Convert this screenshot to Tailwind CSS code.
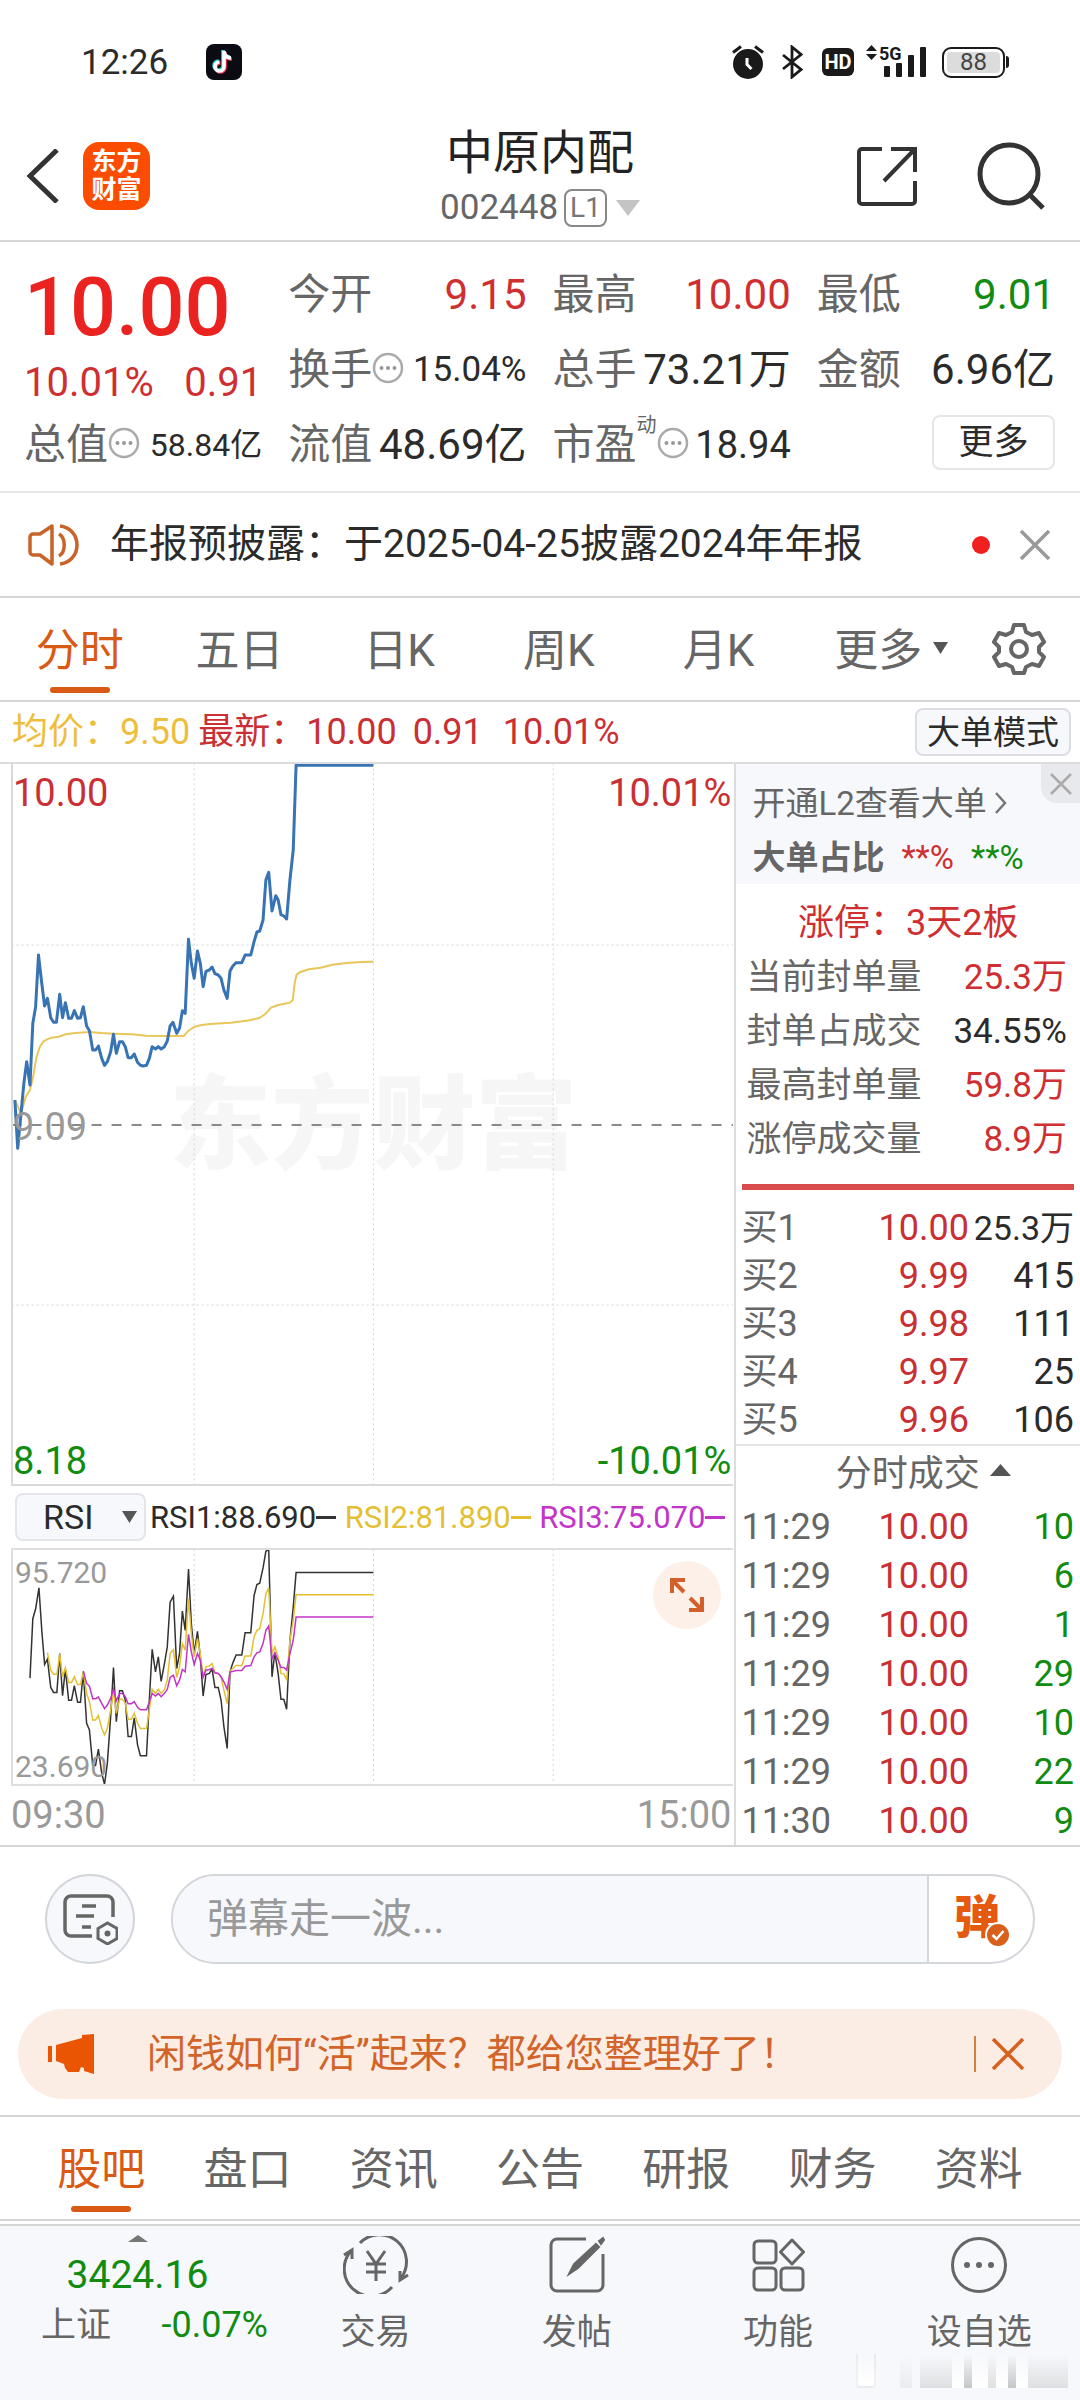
<!DOCTYPE html>
<html lang="zh-CN">
<head>
    <meta charset="UTF-8">
    <meta name="viewport" content="width=device-width, initial-scale=1.0">
    <title>中原内配 002448</title>
    <script src="https://cdn.jsdelivr.net/npm/@tailwindcss/browser@4"></script>
</head>
<body class="bg-white text-[#2b2b2b] font-['Roboto','Noto_Sans_CJK_SC',sans-serif] leading-none min-h-screen flex flex-col">

    <!-- Status bar -->
    <div class="flex items-center justify-between h-[124px] pl-[81px] pr-[71px]">
        <div class="flex items-center gap-[38px]">
            <span class="text-[35px]">12:26</span>
            <svg class="w-9 h-9" viewBox="0 0 36 36">
                <rect width="36" height="36" rx="8" fill="#0b0b14"/>
                <g fill="none" stroke-width="3.6">
                    <path d="M18 7v15.500a4.500 4.500 0 1 1-4.500-4.500M18 8c1 4 4 6 7 6" stroke="#25d6e0" transform="translate(-1 -1)"/>
                    <path d="M18 7v15.500a4.500 4.500 0 1 1-4.500-4.500M18 8c1 4 4 6 7 6" stroke="#f0355a" transform="translate(1 1)"/>
                    <path d="M18 7v15.500a4.500 4.500 0 1 1-4.500-4.500M18 8c1 4 4 6 7 6" stroke="#fff"/>
                </g>
            </svg>
        </div>
        <div class="flex items-center text-[#1a1a1a]">
            <svg class="w-[32px] h-[34px]" viewBox="0 0 32 34" fill="none" stroke="currentColor">
                <circle cx="16" cy="19" r="15" fill="currentColor" stroke="none"/>
                <path d="M1 7.500 9 1.500M31 7.500 23 1.500" stroke-width="3"/>
                <path d="M15 13v6.500l4.500 4.500" stroke="#fff" stroke-width="3"/>
            </svg>
            <svg class="w-[21px] h-[34px] ml-[18px]" viewBox="0 0 21 34" fill="none" stroke="currentColor" stroke-width="2.800">
                <path d="M1 10 19 24.500 10 32V2l9 7.500L1 24"/>
            </svg>
            <span class="ml-[19px] w-8 h-7 rounded-md bg-[#1a1a1a] text-white text-[20px] font-bold flex items-center justify-center">HD</span>
            <div class="relative ml-[12px] w-[60px] h-[34px]">
                <svg class="w-full h-full" viewBox="0 0 60 34" fill="currentColor">
                    <path d="M0 6 5.500 0 11 6zM0 9h11L5.500 15z"/>
                    <rect x="18" y="21" width="6" height="11" rx="1"/>
                    <rect x="30" y="18" width="6" height="14" rx="1"/>
                    <rect x="42" y="10" width="6" height="22" rx="1"/>
                    <rect x="54" y="2" width="6" height="30" rx="1"/>
                </svg>
                <span class="absolute left-[13px] top-0 text-[18px] font-bold">5G</span>
            </div>
            <div class="ml-4 w-[63px] h-[31px] rounded-[9px] border-2 border-[#1a1a1a] p-[3px]">
                <div class="h-full bg-[#dcdcdc] rounded-[4px] text-[#444] text-[24px] flex items-center justify-center">88</div>
            </div>
            <span class="ml-px w-[3px] h-3 bg-[#1a1a1a] rounded-r"></span>
        </div>
    </div>

    <!-- Header -->
    <header class="grid grid-cols-[1fr_auto_1fr] items-center h-[118px] pb-3 px-[27px] border-b-2 border-[#d5d5d5]">
        <div class="flex items-center gap-[24px]">
            <button aria-label="返回">
                <svg class="w-8 h-[54px]" viewBox="0 0 32 54" fill="none" stroke="#333" stroke-width="5"><path d="M30 1 3 27l27 26"/></svg>
            </button>
            <div class="w-[67px] h-[68px] rounded-2xl bg-[#fc4c02] text-white text-[25px] leading-[28px] font-bold text-center flex flex-col justify-center">
                <span>东方</span><span>财富</span>
            </div>
        </div>
        <div class="text-center">
            <h1 class="text-[47px] leading-[56px] text-[#222]">中原内配</h1>
            <button class="mt-2 flex items-center text-[35px] text-[#666] leading-[38px]">
                002448<span class="ml-[6px] h-[38px] px-[4px] border-2 border-[#888] rounded-lg text-[28px] leading-[34px] text-[#777]">L1</span>
                <svg class="ml-[9px] w-6 h-4" viewBox="0 0 24 16"><path d="M0 0h24L12 16z" fill="#c4c4c4"/></svg>
            </button>
        </div>
        <div class="flex items-center justify-end gap-[60px] pr-[8px]">
            <button aria-label="分享">
                <svg class="w-[60px] h-[60px]" viewBox="0 0 60 60" fill="none" stroke="#333" stroke-width="4">
                    <path d="M25 3H5a3 3 0 0 0-3 3v49a3 3 0 0 0 3 3h50a3 3 0 0 0 3-3V35"/>
                    <path d="M34 3h24v23M57 4 27 35"/>
                </svg>
            </button>
            <button aria-label="搜索">
                <svg class="w-[68px] h-[68px]" viewBox="0 0 68 68" fill="none" stroke="#333" stroke-width="5">
                    <circle cx="32" cy="32" r="29"/><path d="M53 53l13 13"/>
                </svg>
            </button>
        </div>
    </header>

    <!-- Quote summary -->
    <section class="grid grid-cols-4 auto-rows-[75px] gap-x-[26px] pl-[24px] pr-[25px] pt-[15px] pb-[9px] border-b-2 border-[#e6e6e6] text-[42px]">
        <div class="row-span-2 whitespace-nowrap">
            <p class="h-[100px] flex items-center text-[81px] font-medium text-[#ea2320]">10.00</p>
            <p class="h-[52px] flex items-center justify-between text-[40px] text-[#cf2f31]"><span>10.01%</span><span>0.91</span></p>
        </div>
        <div class="flex items-center justify-between"><span class="text-[#666]">今开</span><span class="text-[#cf2f31]">9.15</span></div>
        <div class="flex items-center justify-between"><span class="text-[#666]">最高</span><span class="text-[#cf2f31]">10.00</span></div>
        <div class="flex items-center justify-between"><span class="text-[#666]">最低</span><span class="text-[#118c11]">9.01</span></div>
        <div class="flex items-center justify-between">
            <span class="text-[#666] flex items-center">换手
                <svg class="w-[32px] h-[32px] mb-1" viewBox="0 0 32 32"><circle cx="16" cy="16" r="14" fill="none" stroke="#aaa" stroke-width="2.500"/><g fill="#999"><circle cx="9.500" cy="16" r="2"/><circle cx="16" cy="16" r="2"/><circle cx="22.500" cy="16" r="2"/></g></svg>
            </span>
            <span class="text-[35px]">15.04%</span>
        </div>
        <div class="flex items-center justify-between whitespace-nowrap"><span class="text-[#666]">总手</span><span class="text-[42px]">73.21万</span></div>
        <div class="flex items-center justify-between whitespace-nowrap"><span class="text-[#666]">金额</span><span class="text-[42px]">6.96亿</span></div>
        <div class="flex items-center justify-between whitespace-nowrap">
            <span class="text-[#666] flex items-center">总值
                <svg class="w-[32px] h-[32px] mb-1" viewBox="0 0 32 32"><circle cx="16" cy="16" r="14" fill="none" stroke="#aaa" stroke-width="2.500"/><g fill="#999"><circle cx="9.500" cy="16" r="2"/><circle cx="16" cy="16" r="2"/><circle cx="22.500" cy="16" r="2"/></g></svg>
            </span>
            <span class="text-[32px]">58.84亿</span>
        </div>
        <div class="flex items-center justify-between whitespace-nowrap"><span class="text-[#666]">流值</span><span class="text-[42px]">48.69亿</span></div>
        <div class="flex items-center justify-between whitespace-nowrap">
            <span class="text-[#666] flex items-center">市盈<sup class="text-[20px] mb-5">动</sup>
                <svg class="w-[32px] h-[32px] mb-1" viewBox="0 0 32 32"><circle cx="16" cy="16" r="14" fill="none" stroke="#aaa" stroke-width="2.500"/><g fill="#999"><circle cx="9.500" cy="16" r="2"/><circle cx="16" cy="16" r="2"/><circle cx="22.500" cy="16" r="2"/></g></svg>
            </span>
            <span class="text-[38px]">18.94</span>
        </div>
        <div class="flex items-center justify-end"><button class="w-[123px] h-[55px] mb-1 border-2 border-[#e6e6e6] rounded-lg text-[35px] leading-none">更多</button></div>
    </section>

    <!-- Announcement -->
    <section class="flex items-center h-[105px] pl-[28px] pr-[30px] border-b-2 border-[#d5d5d5]">
        <svg class="w-[52px] h-[44px]" viewBox="0 0 52 44" fill="none" stroke="#c8642a" stroke-width="3.500">
            <path d="M24 3v38L12 32H5a3 3 0 0 1-3-3V14a3 3 0 0 1 3-3h7z" stroke-linejoin="round"/>
            <path d="M31 11c7 4 7 18 0 22M32 3c9 1 17 8 17 19s-8 18-17 19"/>
        </svg>
        <a href="#" class="ml-[30px] text-[39px] whitespace-nowrap">年报预披露：于2025-04-25披露2024年年报</a>
        <span class="ml-auto w-[18px] h-[18px] rounded-full bg-[#f0201e]"></span>
        <button class="ml-[30px]" aria-label="关闭公告">
            <svg class="w-[30px] h-[30px]" viewBox="0 0 30 30" stroke="#999" stroke-width="3.500"><path d="M1 1l28 28M29 1 1 29"/></svg>
        </button>
    </section>

    <!-- Period tabs -->
    <nav class="flex h-[104px] border-b-2 border-[#d5d5d5] text-[44px] text-[#666]">
        <button class="relative flex-1 pt-1 text-[#d95a14]">分时<span class="absolute left-1/2 -translate-x-1/2 bottom-[7px] w-[60px] h-[6px] rounded-full bg-[#d95a14]"></span></button>
        <button class="flex-1 pt-1">五日</button>
        <button class="flex-1 pt-1">日K</button>
        <button class="flex-1 pt-1">周K</button>
        <button class="flex-1 pt-1">月K</button>
        <button class="relative flex-1 pt-1">更多<svg class="absolute right-[10px] top-[44px] w-[15px] h-3" viewBox="0 0 15 12"><path d="M0 0h15L7.500 12z" fill="#555"/></svg></button>
        <button class="w-[122px] flex items-center justify-center" aria-label="设置">
            <svg class="w-[54px] h-[54px]" viewBox="0 0 54 54" fill="none" stroke="#666" stroke-width="4" stroke-linejoin="round">
                <path d="M22 3h10l2 7 6 3 7-2 5 9-5 5v5l5 5-5 9-7-2-6 3-2 6H22l-2-6-6-3-7 2-5-9 5-5v-5l-5-5 5-9 7 2 6-3z"/>
                <circle cx="27" cy="27" r="8"/>
            </svg>
        </button>
    </nav>

    <div class="flex items-center h-[62px] pl-[12px] pr-[9px] border-b-2 border-[#dcdcdc] text-[36px] whitespace-nowrap">
        <span class="text-[#edbe3e]">均价：9.50</span>
        <span class="ml-2 text-[#c92f33]">最新：10.00</span>
        <span class="ml-4 text-[#c92f33]">0.91</span>
        <span class="ml-5 text-[#c92f33]">10.01%</span>
        <button class="ml-auto h-12 px-[10px] border-2 border-[#dcdee3] rounded-lg bg-[#f7f8fb] text-[33px] leading-none">大单模式</button>
    </div>

    <main class="flex border-b-2 border-[#d5d5d5]">
        <!-- Charts -->
        <div class="flex-1 min-w-0 pl-[11px] pr-px">
            <div class="relative border-l-2 border-b-2 border-[#d9d9d9] text-[38px]">
                <p class="absolute inset-x-0 top-[311px] text-center text-[102px] font-black text-[#f6f6f6] whitespace-nowrap">东方财富</p>
                <svg class="relative block w-full h-[720px]" viewBox="28 42 1527 2160" preserveAspectRatio="none" fill="none">
                    <g stroke="#d4d4d4" stroke-dasharray="2 3">
                        <path vector-effect="non-scaling-stroke" d="M412 40V2205M792 40V2205M1173 40V2205M25 585H1555M25 1665H1555"/>
                    </g>
                    <path vector-effect="non-scaling-stroke" d="M25 1125H1555" stroke="#8a8a8a" stroke-width="2" stroke-dasharray="10 10"/>
                    <path vector-effect="non-scaling-stroke" stroke="#e9c65a" stroke-width="2" d="M32 1050 45 1090 55 1040 64 1020 70 985 78 920 85 890 92 875 100 868 110 863 125 860 140 853 160 849 190 846 215 849 240 851 280 853 310 857 345 858 390 858 400 842 412 831 425 826 445 822 490 818 530 811 550 804 562 793 575 773 590 765 615 758 621 750 625 700 629 674 637 666 655 658 680 653 705 644 735 639 765 636 792 635"/>
                    <path vector-effect="non-scaling-stroke" stroke="#3873b3" stroke-width="3" stroke-linejoin="round" d="M32 1050 38 1195 45 1090 51 1000 57 935 64 1005 70 820 76 770 82 615 89 700 95 768 101 745 108 803 114 817 120 817 127 733 133 803 139 758 146 805 152 805 158 782 165 805 171 803 177 770 184 828 190 842 197 900 203 900 209 888 216 925 222 946 228 935 235 905 241 853 247 910 254 875 260 875 266 890 272 923 279 923 285 912 292 937 298 946 304 948 311 946 317 925 323 890 330 897 336 890 342 897 349 890 355 873 361 828 367 817 375 850 381 835 387 782 393 790 400 568 406 640 412 685 419 603 425 640 431 710 437 664 444 660 450 651 456 671 463 675 469 685 475 720 482 745 488 663 494 648 501 638 513 638 520 615 532 615 539 575 545 546 551 543 558 510 564 390 570 367 577 483 585 437 590 450 596 494 602 498 608 507 615 390 622 300 628 46H792"/>
                </svg>
                <span class="absolute left-0 top-[10px] text-[#c92f33]">10.00</span>
                <span class="absolute right-[2px] top-[10px] text-[#c92f33]">10.01%</span>
                <span class="absolute left-0 top-[344px] text-[#999]">9.09</span>
                <span class="absolute left-0 bottom-1 text-[#118c11]">8.18</span>
                <span class="absolute right-[2px] bottom-1 text-[#118c11]">-10.01%</span>
            </div>

            <div class="flex items-center h-[62px] pl-[4px] pr-2 text-[31px] whitespace-nowrap">
                <div class="relative w-[131px]">
                    <select class="appearance-none w-full h-[48px] pl-[26px] border-2 border-[#e3e5ea] rounded-lg bg-[#f7f8fb] text-[34px] leading-none" aria-label="指标">
                        <option>RSI</option>
                    </select>
                    <svg class="absolute right-[9px] top-[18px] w-[15px] h-3 pointer-events-none" viewBox="0 0 15 12"><path d="M0 0h15L7.500 12z" fill="#555"/></svg>
                </div>
                <div class="flex flex-1 justify-between pl-1">
                    <span class="flex items-center">RSI1:88.690<i class="w-5 h-[3px] bg-[#333]"></i></span>
                    <span class="flex items-center text-[#e3c033]">RSI2:81.890<i class="w-5 h-[3px] bg-[#e3c033]"></i></span>
                    <span class="flex items-center text-[#c235c8]">RSI3:75.070<i class="w-5 h-[3px] bg-[#c235c8]"></i></span>
                </div>
            </div>

            <div class="relative border-l-2 border-t-2 border-b-2 border-[#dedede] text-[30px] text-[#999]">
                <svg class="block w-full h-[234px]" viewBox="28 208 1527 705" preserveAspectRatio="none" fill="none">
                    <path vector-effect="non-scaling-stroke" stroke="#d4d4d4" stroke-dasharray="2 3" d="M412 205V914M792 205V914M1173 205V914"/>
                    <path vector-effect="non-scaling-stroke" stroke="#333" stroke-width="1.500" d="M64 594 70 415 76 385 83 322 89 450 95 553 101 537 108 622 114 637 121 637 127 520 133 647 139 567 146 661 152 661 158 617 165 667 171 667 177 575 184 730 190 750 197 857 203 857 209 808 216 880 222 914 228 850 235 710 241 562 247 725 254 632 260 632 266 660 272 770 279 770 285 714 292 795 298 828 311 828 317 660 323 507 330 575 336 530 342 604 349 550 355 500 361 365 368 347 375 565 381 520 387 392 393 450 400 265 406 430 412 520 419 453 425 530 431 648 437 583 444 580 450 567 456 622 463 622 469 660 475 740 482 806 488 575 494 548 501 524 513 524 520 457 532 457 539 345 545 312 551 308 558 262 564 212 570 207 577 590 583 517 590 580 596 658 602 658 608 688 615 480 622 380 628 276H792"/>
                    <path vector-effect="non-scaling-stroke" stroke="#e3c033" stroke-width="1.500" d="M101 517 108 570 114 582 121 582 127 522 133 590 139 563 146 607 152 607 158 590 165 613 171 613 177 575 184 640 190 665 197 720 203 720 209 707 216 745 222 765 228 745 235 690 241 632 247 700 254 658 260 658 266 670 272 718 279 718 285 700 292 730 298 746 311 746 317 690 323 628 330 640 336 628 342 640 349 628 355 600 361 520 368 508 375 592 381 560 387 490 393 510 400 355 406 460 412 530 419 475 425 520 431 590 437 560 444 558 450 550 456 578 463 580 469 590 475 630 482 671 488 572 494 565 501 556 513 556 520 527 532 527 539 470 545 450 551 445 558 400 564 340 570 322 577 520 583 500 590 530 596 580 602 582 608 598 615 480 622 420 628 343H792"/>
                    <path vector-effect="non-scaling-stroke" stroke="#c235c8" stroke-width="1.500" d="M177 572 184 610 190 618 197 656 203 656 209 651 216 670 222 686 228 675 235 655 241 627 247 662 254 640 260 640 266 650 272 671 279 671 285 665 292 682 298 689 311 689 317 665 323 640 330 648 336 640 342 650 349 640 355 628 361 592 368 585 375 617 381 600 387 568 393 575 400 462 406 515 412 553 419 520 425 540 431 592 437 570 444 568 450 565 456 578 463 580 469 590 475 605 482 628 488 576 501 571 513 571 520 558 532 556 539 530 545 518 551 515 558 490 564 450 570 437 577 537 583 517 590 540 596 562 602 562 608 570 615 520 622 480 628 410H792"/>
                </svg>
                <span class="absolute left-[2px] top-2">95.720</span>
                <span class="absolute left-[2px] bottom-[2px]">23.690</span>
                <button class="absolute right-3 top-[11px] w-[68px] h-[68px] rounded-full bg-[#fdf0e8] flex items-center justify-center" aria-label="全屏">
                    <svg class="w-[34px] h-[34px]" viewBox="0 0 34 34" fill="none" stroke="#d2602a" stroke-width="4"><path d="M2 15V2h13M2 2l12 12M32 19v13H19M32 32 20 20"/></svg>
                </button>
            </div>
            <div class="flex justify-between items-center h-[58px] pr-[2px] text-[38px] text-[#999]"><span>09:30</span><span>15:00</span></div>
        </div>

        <!-- Order book -->
        <aside class="w-[32%] border-l-2 border-[#dcdcdc] whitespace-nowrap">
            <div class="relative bg-[#f7f8fb] pl-[16px] pt-[12px] h-[120px] text-[33px] text-[#666]">
                <a href="#" class="flex items-center h-[54px]">开通L2查看大单<svg class="ml-[8px] w-[12px] h-[22px]" viewBox="0 0 12 22" fill="none" stroke="#777" stroke-width="2.500"><path d="M1 1l9 10L1 21"/></svg></a>
                <p class="flex items-center h-[54px]"><b>大单占比</b><span class="ml-[17px] text-[#cf2f31]">**%</span><span class="ml-[17px] text-[#118c11]">**%</span></p>
                <button class="absolute right-0 top-0 w-[39px] h-[39px] rounded-bl-2xl bg-[#e8e9ec] flex items-center justify-center" aria-label="关闭">
                    <svg class="w-[22px] h-[22px]" viewBox="0 0 22 22" stroke="#aaa" stroke-width="2.500"><path d="M1 1l20 20M21 1 1 21"/></svg>
                </button>
            </div>
            <p class="flex items-center justify-center h-[66px] pt-[12px] text-[36px] text-[#cf2f31]">涨停：3天2板</p>
            <dl class="pl-[10px] pr-[13px] text-[35px] text-[#666]">
                <div class="flex items-center justify-between h-[54px]"><dt>当前封单量</dt><dd class="text-[#cf2f31]">25.3万</dd></div>
                <div class="flex items-center justify-between h-[54px]"><dt>封单占成交</dt><dd class="text-[#2b2b2b]">34.55%</dd></div>
                <div class="flex items-center justify-between h-[54px]"><dt>最高封单量</dt><dd class="text-[#cf2f31]">59.8万</dd></div>
                <div class="flex items-center justify-between h-[54px]"><dt>涨停成交量</dt><dd class="text-[#cf2f31]">8.9万</dd></div>
            </dl>
            <div class="mx-[6px] mt-[18px] h-[6px] bg-[#d94b4b]"></div>
            <div class="pt-[14px] border-b-2 border-[#e4e4e4]">
                <table class="w-full table-fixed text-[36px] text-right">
                    <tr class="h-12"><th class="pl-[5px] font-normal text-left text-[#666]">买1</th><td class="text-[#c92f33]">10.00</td><td class="w-[111px] pr-[6px] text-[34px]">25.3万</td></tr>
                    <tr class="h-12"><th class="pl-[5px] font-normal text-left text-[#666]">买2</th><td class="text-[#c92f33]">9.99</td><td class="pr-[6px]">415</td></tr>
                    <tr class="h-12"><th class="pl-[5px] font-normal text-left text-[#666]">买3</th><td class="text-[#c92f33]">9.98</td><td class="pr-[6px]">111</td></tr>
                    <tr class="h-12"><th class="pl-[5px] font-normal text-left text-[#666]">买4</th><td class="text-[#c92f33]">9.97</td><td class="pr-[6px]">25</td></tr>
                    <tr class="h-12"><th class="pl-[5px] font-normal text-left text-[#666]">买5</th><td class="text-[#c92f33]">9.96</td><td class="pr-[6px]">106</td></tr>
                </table>
            </div>
            <button class="flex items-center justify-center gap-[10px] w-full h-[56px] pl-[30px] text-[36px] text-[#666]">分时成交<svg class="w-[21px] h-3 mb-2" viewBox="0 0 21 12"><path d="M0 12 10.500 0 21 12z" fill="#555"/></svg></button>
            <table class="w-full table-fixed text-[36px] text-right">
                <tr class="h-[49px]"><td class="pl-[5px] text-left text-[#666]">11:29</td><td class="text-[#c92f33]">10.00</td><td class="w-[111px] pr-[6px] text-[#118c11]">10</td></tr>
                <tr class="h-[49px]"><td class="pl-[5px] text-left text-[#666]">11:29</td><td class="text-[#c92f33]">10.00</td><td class="pr-[6px] text-[#118c11]">6</td></tr>
                <tr class="h-[49px]"><td class="pl-[5px] text-left text-[#666]">11:29</td><td class="text-[#c92f33]">10.00</td><td class="pr-[6px] text-[#118c11]">1</td></tr>
                <tr class="h-[49px]"><td class="pl-[5px] text-left text-[#666]">11:29</td><td class="text-[#c92f33]">10.00</td><td class="pr-[6px] text-[#118c11]">29</td></tr>
                <tr class="h-[49px]"><td class="pl-[5px] text-left text-[#666]">11:29</td><td class="text-[#c92f33]">10.00</td><td class="pr-[6px] text-[#118c11]">10</td></tr>
                <tr class="h-[49px]"><td class="pl-[5px] text-left text-[#666]">11:29</td><td class="text-[#c92f33]">10.00</td><td class="pr-[6px] text-[#118c11]">22</td></tr>
                <tr class="h-[49px]"><td class="pl-[5px] text-left text-[#666]">11:30</td><td class="text-[#c92f33]">10.00</td><td class="pr-[6px] text-[#118c11]">9</td></tr>
            </table>
        </aside>
    </main>

    <!-- Live comment box -->
    <div class="flex items-center gap-[36px] pt-[27px] pl-[45px] pr-[45px]">
        <button class="w-[90px] h-[90px] shrink-0 rounded-full border-2 border-[#d3d6da] bg-[#f7f8fb] flex items-center justify-center" aria-label="弹幕设置">
            <svg class="w-[56px] h-[52px]" viewBox="0 0 56 52" fill="none" stroke="#666" stroke-width="3.500">
                <path d="M30 43H9a6 6 0 0 1-6-6V9a6 6 0 0 1 6-6h36a6 6 0 0 1 6 6v15"/>
                <path d="M20 13h14M14 23h18M20 34h9"/>
                <path d="M45.500 30 55 35.500v10L45.500 51 36 45.500v-10z" stroke-width="3"/><circle cx="45.500" cy="40.500" r="3" fill="#666" stroke="none"/>
            </svg>
        </button>
        <div class="flex flex-1 h-[90px] rounded-full border-2 border-[#d3d6da] overflow-hidden">
            <input type="text" aria-label="弹幕" placeholder="弹幕走一波..." class="flex-1 min-w-0 pl-[34px] bg-[#f7f8fb] text-[41px] leading-none placeholder:text-[#999] outline-none">
            <button class="relative w-[106px] border-l-2 border-[#d3d6da] pr-[8px] pb-1 text-[46px] leading-none font-black text-[#e35a10]" aria-label="弹幕开关">弹
                <svg class="absolute right-[22px] bottom-[14px] w-[26px] h-[26px]" viewBox="0 0 26 26"><circle cx="13" cy="13" r="12" fill="#d8601c" stroke="#fff" stroke-width="2"/><path d="M7.500 13l4 4 7-8" fill="none" stroke="#fff" stroke-width="2.500"/></svg>
            </button>
        </div>
    </div>

    <!-- Promo banner -->
    <div class="flex items-center h-[90px] mt-[45px] mx-[18px] pl-[30px] pr-[38px] rounded-full bg-[#fcede4] text-[#d2642a]">
        <svg class="w-[46px] h-[40px]" viewBox="0 0 46 40" fill="#ea5504"><path d="M0 12h4v16H0zM8 11 34 4V1L46 0v40l-10-3v-3l-3-1-2 5H20l-3-4-1-4-8-3z"/></svg>
        <a href="#" class="ml-[53px] text-[39px] whitespace-nowrap">闲钱如何“活”起来？都给您整理好了！</a>
        <span class="ml-auto w-[2px] h-9 bg-[#d2803f]"></span>
        <button class="ml-[16px]" aria-label="关闭广告">
            <svg class="w-[32px] h-[32px]" viewBox="0 0 32 32" stroke="#d8601c" stroke-width="3.500"><path d="M1 1l30 30M31 1 1 31"/></svg>
        </button>
    </div>

    <!-- Content tabs -->
    <nav class="mt-[16px] flex h-[106px] px-[28px] border-y-2 border-[#d5d5d5] text-[44px] text-[#666]">
        <button class="relative flex-1 pt-1 text-[#d95a14]">股吧<span class="absolute left-1/2 -translate-x-1/2 bottom-[7px] w-[60px] h-[6px] rounded-full bg-[#d95a14]"></span></button>
        <button class="flex-1 pt-1">盘口</button>
        <button class="flex-1 pt-1">资讯</button>
        <button class="flex-1 pt-1">公告</button>
        <button class="flex-1 pt-1">研报</button>
        <button class="flex-1 pt-1">财务</button>
        <button class="flex-1 pt-1">资料</button>
    </nav>

    <!-- Bottom bar -->
    <footer class="relative flex flex-1 mt-[3px] border-t-2 border-[#d5d5d5] bg-[#f7f8fb] text-[35px] text-[#666]">
        <button class="w-[275px] flex flex-col items-center pt-[9px]">
            <svg class="w-5 h-[7px]" viewBox="0 0 20 7"><path d="M0 7 10 0l10 7z" fill="#777"/></svg>
            <span class="mt-[14px] text-[39px] text-[#118c11]">3424.16</span>
            <span class="mt-[12px] w-full flex items-center justify-between pl-[41px] pr-[7px]">上证<span class="text-[36px] text-[#118c11]">-0.07%</span></span>
        </button>
        <button class="flex-1 flex flex-col items-center pt-[10px]">
            <svg class="w-[66px] h-[58px]" viewBox="0 0 66 58" fill="none" stroke="#666" stroke-width="3">
                <path d="M17 7A27 27 0 0 1 58 42M49 51A27 27 0 0 1 8 15"/>
                <path d="M1 19l8-5v9M65 39l-8 5V35"/>
                <path d="M24 15l9 13 9-13M33 28v17M23 28h20M23 36h20"/>
            </svg>
            <span class="mt-[21px]">交易</span>
        </button>
        <button class="flex-1 flex flex-col items-center pt-[10px]">
            <svg class="w-[58px] h-[58px]" viewBox="0 0 58 58" fill="none" stroke="#666" stroke-width="3">
                <path d="M38 3H9a6 6 0 0 0-6 6v40a6 6 0 0 0 6 6h40a6 6 0 0 0 6-6V18"/>
                <path d="M21 38l5-10L48 8l3 3-21 21zM51 5l4-3 1 2-3 4z" fill="#666" stroke-width="2"/>
            </svg>
            <span class="mt-[21px]">发帖</span>
        </button>
        <button class="flex-1 flex flex-col items-center pt-[10px]">
            <svg class="w-[54px] h-[58px]" viewBox="0 0 54 58" fill="none" stroke="#666" stroke-width="3">
                <rect x="3" y="5" width="22" height="22" rx="4"/><rect x="3" y="32" width="22" height="22" rx="4"/><rect x="30" y="32" width="22" height="22" rx="4"/>
                <path d="M41 4l11.500 12L41 28 29.500 16z" stroke-linejoin="round"/>
            </svg>
            <span class="mt-[21px]">功能</span>
        </button>
        <button class="flex-1 flex flex-col items-center pt-[10px]">
            <svg class="w-[58px] h-[58px]" viewBox="0 0 58 58" fill="none" stroke="#666" stroke-width="3">
                <circle cx="29" cy="29" r="26.500"/><g fill="#666" stroke="none"><circle cx="17" cy="29" r="3"/><circle cx="29" cy="29" r="3"/><circle cx="41" cy="29" r="3"/></g>
            </svg>
            <span class="mt-[21px]">设自选</span>
        </button>
        <div class="absolute right-3 bottom-3 flex h-[34px] pointer-events-none">
            <i class="w-5 mr-6 rounded-b bg-linear-to-b from-transparent to-white border-x-2 border-b-2 border-black/5"></i>
            <i class="w-3 mr-2 bg-linear-to-b from-transparent to-black/5"></i>
            <i class="w-8 bg-linear-to-b from-transparent to-black/10"></i>
            <i class="w-3 bg-linear-to-b from-transparent to-white"></i>
            <i class="w-2 bg-linear-to-b from-transparent to-black/20"></i>
            <i class="w-4 bg-linear-to-b from-transparent to-white"></i>
            <i class="w-2 bg-linear-to-b from-transparent to-black/10"></i>
            <i class="w-3 bg-linear-to-b from-transparent to-white"></i>
            <i class="w-2 bg-linear-to-b from-transparent to-black/20"></i>
            <i class="w-3 bg-linear-to-b from-transparent to-white"></i>
            <i class="w-10 bg-linear-to-b from-transparent to-black/10"></i>
        </div>
    </footer>

</body>
</html>
